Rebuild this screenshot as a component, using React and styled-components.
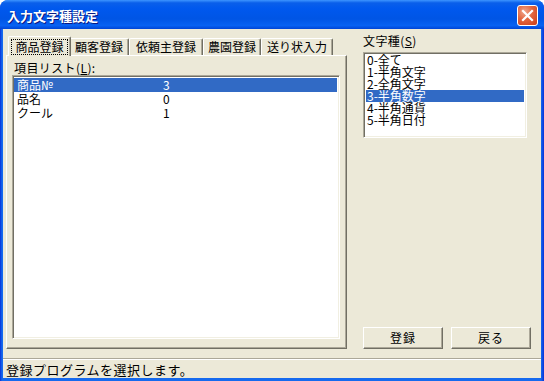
import styled, { createGlobalStyle } from 'styled-components'

const tabs = [
  { label: '商品登録', w: 63 },
  { label: '顧客登録', w: 60 },
  { label: '依頼主登録', w: 74 },
  { label: '農園登録', w: 58 },
  { label: '送り状入力', w: 72 },
]

const fields = [
  { name: '商品№', count: '3' },
  { name: '品名', count: '0' },
  { name: 'クール', count: '1' },
]

const kinds = ['0-全て', '1-半角文字', '2-全角文字', '3-半角数字', '4-半角通貨', '5-半角日付']

export default function App() {
  return (
    <>
      <GlobalStyle />
      <Window>
        <TitleBar>
          <Title>入力文字種設定</Title>
          <CloseButton>
            <svg width="13" height="13" viewBox="0 0 13 13">
              <path d="M2 2 L11 11 M11 2 L2 11" stroke="#fff" strokeWidth="2.2" strokeLinecap="square" />
            </svg>
          </CloseButton>
        </TitleBar>
        <Client>
          <Main>
            <LeftPane>
              <TabStrip>
                {tabs.map((t, i) => (
                  <Tab key={t.label} $active={i === 0} $w={t.w}>
                    {i === 0 ? <Focus>{t.label}</Focus> : t.label}
                  </Tab>
                ))}
              </TabStrip>
              <TabPanel>
                <Label $indent>
                  項目リスト(<u>L</u>):
                </Label>
                <ListBox>
                  {fields.map((f, i) => (
                    <FieldRow key={f.name} $selected={i === 0}>
                      <span>{f.name}</span>
                      <span>{f.count}</span>
                    </FieldRow>
                  ))}
                </ListBox>
              </TabPanel>
            </LeftPane>
            <RightPane>
              <Label>
                文字種(<u>S</u>)
              </Label>
              <KindList>
                {kinds.map((k, i) => (
                  <KindRow key={k} $selected={i === 3}>
                    {k}
                  </KindRow>
                ))}
              </KindList>
              <ButtonRow>
                <Button>登録</Button>
                <Button>戻る</Button>
              </ButtonRow>
            </RightPane>
          </Main>
          <StatusBar>登録プログラムを選択します。</StatusBar>
        </Client>
      </Window>
    </>
  )
}

const GlobalStyle = createGlobalStyle`
  html, body {
    margin: 0;
    padding: 0;
    background: #fff;
  }
  body {
    font-family: "Noto Sans CJK JP", "Noto Sans", sans-serif;
    font-size: 12px;
    color: #000;
  }
`

const Window = styled.div`
  width: 544px;
  height: 381px;
  display: flex;
  flex-direction: column;
  background: linear-gradient(to right, #0831D9 0px, #166AEE 2px, #166AEE 541px, #0831D9 544px);
  border-radius: 8px 8px 0 0;
  overflow: hidden;
`

const TitleBar = styled.div`
  height: 29px;
  flex: none;
  box-sizing: border-box;
  display: flex;
  align-items: center;
  justify-content: space-between;
  padding: 2px 7px 0 7px;
  background: linear-gradient(180deg, #3D95FF 0%, #0A5FEA 10%, #0058EE 30%, #0055E5 65%, #0862F2 88%, #0045D6 100%);
`

const Title = styled.div`
  color: #fff;
  font-size: 13px;
  font-weight: 700;
  line-height: 15px;
  text-shadow: 1px 1px #0A1883;
`

const CloseButton = styled.div`
  width: 21px;
  height: 21px;
  box-sizing: border-box;
  border: 1px solid #fff;
  border-radius: 3px;
  margin-right: -1px;
  display: flex;
  align-items: center;
  justify-content: center;
  background: radial-gradient(circle at 35% 30%, #F0A88E 0%, #E2653E 45%, #C93C17 100%);
`

const Client = styled.div`
  flex: 1;
  margin: 0 3px 3px;
  background: #ECE9D8;
  display: flex;
  flex-direction: column;
`

const Main = styled.div`
  height: 329px;
  box-sizing: border-box;
  display: flex;
  gap: 16px;
  padding: 4px 10px 9px 3px;
`

const LeftPane = styled.div`
  width: 341px;
  display: flex;
  flex-direction: column;
  padding-top: 3px;
`

const TabStrip = styled.div`
  height: 19px;
  display: flex;
  align-items: flex-end;
  padding-left: 4px;
`

const Tab = styled.div`
  box-sizing: border-box;
  width: ${p => p.$w}px;
  height: ${p => (p.$active ? 20 : 17)}px;
  margin: ${p => (p.$active ? '0 -2px -1px -2px' : '0')};
  position: relative;
  z-index: ${p => (p.$active ? 1 : 0)};
  background: #ECE9D8;
  border-top: 1px solid #fff;
  border-left: 1px solid #fff;
  border-right: 1px solid #716F64;
  border-radius: 2px 2px 0 0;
  box-shadow: inset -1px 0 #ACA899;
  display: flex;
  align-items: center;
  justify-content: center;
  line-height: 14px;
  white-space: nowrap;
`

const Focus = styled.span`
  border: 1px dotted #000;
  padding: 0 3px;
  line-height: 14px;
`

const TabPanel = styled.div`
  flex: 1;
  display: flex;
  flex-direction: column;
  border: 1px solid;
  border-color: #fff #716F64 #716F64 #fff;
  box-shadow: inset -1px -1px #ACA899;
  padding: 4px 6px 9px 5px;
`

const Label = styled.div`
  line-height: 15px;
  height: 15px;
  margin-left: ${p => (p.$indent ? '2px' : '0')};
  margin-bottom: ${p => (p.$indent ? '0' : '4px')};
  letter-spacing: 0.4px;
  white-space: nowrap;
`

const sunken = `
  box-sizing: border-box;
  background: #fff;
  border: 1px solid;
  border-color: #ACA899 #fff #fff #ACA899;
  box-shadow: inset 1px 1px #716F64, inset -1px -1px #F1EFE2;
`

const ListBox = styled.div`
  ${sunken}
  flex: 1;
  padding: 2px 2px 0 1px;
`

const FieldRow = styled.div`
  display: grid;
  grid-template-columns: 146px 1fr;
  height: 14px;
  line-height: 14px;
  padding-left: 3px;
  background: ${p => (p.$selected ? '#316AC5' : 'transparent')};
  color: ${p => (p.$selected ? '#fff' : '#000')};
`

const RightPane = styled.div`
  width: 168px;
  display: flex;
  flex-direction: column;
`

const KindList = styled.div`
  ${sunken}
  width: 164px;
  height: 86px;
  padding: 1px 2px 0 2px;
`

const KindRow = styled.div`
  height: 12px;
  line-height: 12px;
  padding-left: 1px;
  background: ${p => (p.$selected ? '#316AC5' : 'transparent')};
  color: ${p => (p.$selected ? '#fff' : '#000')};
  white-space: nowrap;
`

const ButtonRow = styled.div`
  margin-top: auto;
  display: flex;
  gap: 8px;
`

const Button = styled.button`
  width: 80px;
  height: 22px;
  padding: 0;
  background: #ECE9D8;
  border: 1px solid;
  border-color: #fff #716F64 #716F64 #fff;
  box-shadow: inset -1px -1px #ACA899;
  font-family: inherit;
  font-size: 12px;
  line-height: 14px;
  letter-spacing: 1px;
  color: #000;
`

const StatusBar = styled.div`
  height: 20px;
  box-sizing: border-box;
  border-top: 1px solid #ACA899;
  box-shadow: inset 0 1px #fff;
  display: flex;
  align-items: center;
  padding: 1px 0 0 3px;
  font-size: 13px;
  letter-spacing: 0.5px;
  line-height: 15px;
  white-space: nowrap;
`
